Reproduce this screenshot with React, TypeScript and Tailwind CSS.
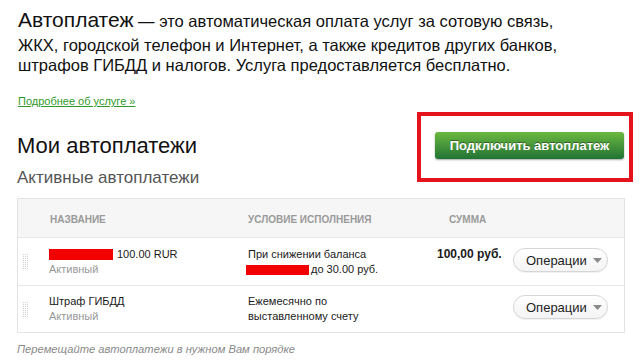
import React from "react";

const Handle = () => (
  <svg width="6" height="16" viewBox="0 0 6 16" className="absolute left-[5px] top-[16px]">
    {[0, 1, 2, 3, 4, 5, 6, 7].map((r) =>
      [0, 1, 2].map((c) => (
        <rect key={`${r}-${c}`} x={c * 2} y={r * 2} width="1" height="1" fill="#d0d0d0" />
      ))
    )}
  </svg>
);

const OpsButton = () => (
  <button className="flex h-[24px] w-[95px] items-center rounded-full border border-[#d6d6d6] bg-gradient-to-b from-white to-[#f4f4f4] pl-[12px] text-[13px] text-[#222] shadow-[0_1px_1px_rgba(0,0,0,0.06)]">
    <span>Операции</span>
    <svg width="9" height="5" viewBox="0 0 9 5" className="ml-[6px] mt-[1px]">
      <path d="M0 0 L9 0 L4.5 5 Z" fill="#8a8a8a" />
    </svg>
  </button>
);

export default function App() {
  return (
    <div
      className="relative h-[364px] w-[640px] overflow-hidden bg-white pl-[17px] pr-[15px] text-[#1a1a1a]"
      style={{ fontFamily: '"Liberation Sans", Arial, Helvetica, sans-serif' }}
    >
      <p className="ml-[1px] pt-[5px] text-[16.5px] leading-[20px] text-[#111]">
        <span className="text-[21px] leading-[30px]">Автоплатеж</span> — это автоматическая оплата услуг за сотовую связь,
        <br />
        ЖКХ, городской телефон и Интернет, а также кредитов других банков,
        <br />
        штрафов ГИБДД и налогов. Услуга предоставляется бесплатно.
      </p>
      <a href="#" className="ml-[1px] mt-[20px] block text-[11px] leading-[13px] text-[#2f9a2a] underline">
        Подробнее об услуге »
      </a>

      <div className="mt-[24px] flex h-[27px] items-center justify-between">
        <h2 className="text-[22px] leading-[24px] text-[#111]">Мои автоплатежи</h2>
        <div className="relative mr-[1px]">
          <div className="pointer-events-none absolute left-[-18px] right-[-9px] top-[-20px] bottom-[-23px] border-[4px] border-[#e5141c]" />
          <button
            className="h-[27px] w-[189px] rounded-[3px] bg-gradient-to-b from-[#6bb83f] to-[#1f7434] text-[13px] font-bold text-white shadow-[0_1px_2px_rgba(0,0,0,0.35)]"
            style={{ textShadow: "0 -1px 0 rgba(0,0,0,0.4)" }}
          >
            Подключить автоплатеж
          </button>
        </div>
      </div>

      <h3 className="mt-[9px] text-[17px] leading-[20px] text-[#555]">Активные автоплатежи</h3>

      <div className="mt-[10px] w-[608px] border border-[#e3e3e3]">
        <div className="flex h-[39px] items-center border-b border-[#e6e6e6] bg-[#f6f6f6] pt-[3px] text-[10px] font-bold uppercase text-[#9a9a9a]">
          <div className="w-[230px] pl-[32px]">Название</div>
          <div className="w-[201px]">Условие исполнения</div>
          <div>Сумма</div>
        </div>

        <div className="relative flex h-[48px] items-start border-b border-[#e6e6e6] pt-[9px] text-[11px] leading-[15px]">
          <Handle />
          <div className="w-[230px] pl-[31px]">
            <div className="flex items-center">
              <span className="mr-[4px] inline-block h-[11px] w-[64px] bg-[#f20000]" />
              <span>100.00 RUR</span>
            </div>
            <div className="text-[#999]">Активный</div>
          </div>
          <div className="w-[189px]">
            <div>При снижении баланса</div>
            <div className="flex items-center">
              <span className="ml-[-2px] mr-[2px] inline-block h-[10px] w-[63px] bg-[#f20000]" />
              <span>до 30.00 руб.</span>
            </div>
          </div>
          <div className="w-[76px] text-[12px] font-bold">100,00 руб.</div>
          <div className="mt-[1px]">
            <OpsButton />
          </div>
        </div>

        <div className="relative flex h-[46px] items-start pt-[8px] text-[11px] leading-[15px]">
          <Handle />
          <div className="w-[230px] pl-[31px]">
            <div>Штраф ГИБДД</div>
            <div className="text-[#999]">Активный</div>
          </div>
          <div className="w-[189px]">
            <div>Ежемесячно по</div>
            <div>выставленному счету</div>
          </div>
          <div className="w-[76px]" />
          <div className="mt-[1px]">
            <OpsButton />
          </div>
        </div>
      </div>

      <p className="mt-[9px] text-[11.2px] italic leading-[15px] text-[#8a8a8a]">
        Перемещайте автоплатежи в нужном Вам порядке
      </p>
    </div>
  );
}
